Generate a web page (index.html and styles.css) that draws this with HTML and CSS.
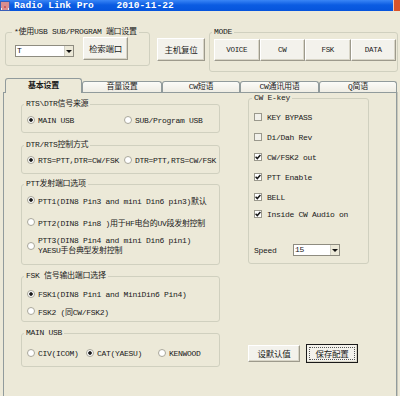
FILE: index.html
```html
<!DOCTYPE html>
<html lang="zh-CN">

<head>
    <meta charset="UTF-8">
    <meta name="viewport" content="width=device-width, initial-scale=1.0">
    <title>Radio Link Pro</title>
    <link rel="stylesheet" href="styles.css">
</head>

<body>
    <div class="titlebar">
        <svg class="app-icon" viewBox="0 0 10 10">
            <rect x="0" y="0" width="10" height="10" fill="#f4f4f4"/>
            <path d="M1 2h3M1 4h3M6 2h3M6 4h3M5 1v8M1 6h8M2 8h2M6 8h2" stroke="#c0282a" stroke-width="1"/>
            <rect x="0.5" y="0.5" width="9" height="9" fill="none" stroke="#3a5fb8" stroke-width="1"/>
        </svg>
        <span class="title">Radio Link Pro    2010-11-22</span>
        <span class="close-btn"></span>
    </div>

    <div class="toolbar">
        <fieldset class="group port-group">
            <legend>*使用USB SUB/PROGRAM 端口设置</legend>
            <div class="port-row">
                <div class="combo port-combo">
                    <span class="combo-value">T</span>
                    <span class="combo-arrow"></span>
                </div>
                <button class="btn port-btn">检索端口</button>
            </div>
        </fieldset>

        <button class="btn reset-btn">主机复位</button>

        <fieldset class="group mode-group">
            <legend>MODE</legend>
            <div class="mode-row">
                <button class="btn mode-btn">VOICE</button>
                <button class="btn mode-btn">CW</button>
                <button class="btn mode-btn">FSK</button>
                <button class="btn mode-btn">DATA</button>
            </div>
        </fieldset>
    </div>

    <div class="tabs">
        <div class="tab active">基本设置</div>
        <div class="tab tab-w80">音量设置</div>
        <div class="tab">CW短语</div>
        <div class="tab tab-w79">CW通讯用语</div>
        <div class="tab">Q简语</div>
    </div>

    <div class="tab-panel">
        <div class="left-col">
            <fieldset class="group opt-group g-source">
                <legend>RTS\DTR信号来源</legend>
                <div class="radio-row">
                    <label class="radio-item w97"><span class="radio checked"></span>MAIN USB</label>
                    <label class="radio-item"><span class="radio"></span>SUB/Program USB</label>
                </div>
            </fieldset>

            <fieldset class="group opt-group g-control">
                <legend>DTR/RTS控制方式</legend>
                <div class="radio-row">
                    <label class="radio-item w97"><span class="radio checked"></span>RTS=PTT,DTR=CW/FSK</label>
                    <label class="radio-item"><span class="radio"></span>DTR=PTT,RTS=CW/FSK</label>
                </div>
            </fieldset>

            <fieldset class="group opt-group g-ptt">
                <legend>PTT发射端口选项</legend>
                <div class="radio-row">
                    <label class="radio-item"><span class="radio checked"></span>PTT1(DIN8 Pin3 and mini Din6 pin3)默认</label>
                </div>
                <div class="radio-row row-gap12">
                    <label class="radio-item"><span class="radio"></span>PTT2(DIN8 Pin8 )用于HF电台的UV段发射控制</label>
                </div>
                <div class="radio-row row-gap9 two-line">
                    <label class="radio-item"><span class="radio"></span>
                        <span>PTT3(DIN8 Pin4 and mini Din6 pin1)<br>YAESU手台典型发射控制</span>
                    </label>
                </div>
            </fieldset>

            <fieldset class="group opt-group g-fsk">
                <legend>FSK 信号输出端口选择</legend>
                <div class="radio-row">
                    <label class="radio-item"><span class="radio checked"></span>FSK1(DIN8 Pin1 and MiniDin6 Pin4)</label>
                </div>
                <div class="radio-row row-gap7">
                    <label class="radio-item"><span class="radio"></span>FSK2 (同CW/FSK2)</label>
                </div>
            </fieldset>

            <fieldset class="group opt-group g-usb">
                <legend>MAIN USB</legend>
                <div class="radio-row">
                    <label class="radio-item w59"><span class="radio"></span>CIV(ICOM)</label>
                    <label class="radio-item w72"><span class="radio checked"></span>CAT(YAESU)</label>
                    <label class="radio-item"><span class="radio"></span>KENWOOD</label>
                </div>
            </fieldset>
        </div>

        <div class="right-col">
            <fieldset class="group ekey-group">
                <legend>CW E-key</legend>
                <label class="check-row"><span class="check off"></span>KEY BYPASS</label>
                <label class="check-row"><span class="check off"></span>Di/Dah Rev</label>
                <label class="check-row"><span class="check"><svg viewBox="0 0 6 6"><path d="M0.6 2.8 L2.3 4.6 L5.4 0.9" fill="none" stroke="#1a1a1a" stroke-width="1.5"/></svg></span>CW/FSK2 out</label>
                <label class="check-row"><span class="check"><svg viewBox="0 0 6 6"><path d="M0.6 2.8 L2.3 4.6 L5.4 0.9" fill="none" stroke="#1a1a1a" stroke-width="1.5"/></svg></span>PTT Enable</label>
                <label class="check-row"><span class="check"><svg viewBox="0 0 6 6"><path d="M0.6 2.8 L2.3 4.6 L5.4 0.9" fill="none" stroke="#1a1a1a" stroke-width="1.5"/></svg></span>BELL</label>
                <label class="check-row last"><span class="check"><svg viewBox="0 0 6 6"><path d="M0.6 2.8 L2.3 4.6 L5.4 0.9" fill="none" stroke="#1a1a1a" stroke-width="1.5"/></svg></span>Inside CW Audio on</label>

                <div class="speed-row">
                    <span class="speed-label">Speed</span>
                    <div class="combo speed-combo">
                        <span class="combo-value">15</span>
                        <span class="combo-arrow"></span>
                    </div>
                </div>
            </fieldset>

            <div class="action-row">
                <button class="btn action-btn">设默认值</button>
                <button class="btn action-btn default">保存配置</button>
            </div>
        </div>
    </div>
</body>

</html>
```

FILE: styles.css
```css
* {
    box-sizing: border-box;
}

body {
    margin: 0;
    width: 400px;
    height: 396px;
    overflow: hidden;
    background-color: #ece9d8;
    font-family: 'Liberation Mono', 'Noto Sans CJK SC', monospace;
    font-size: 8px;
    letter-spacing: -0.3px;
    color: #1a1a1a;
}

/* barra de titulo */
.titlebar {
    height: 11px;
    display: flex;
    align-items: center;
    background: linear-gradient(#3a86f6, #0b5ce2 45%, #0654dc);
}

.app-icon {
    width: 10px;
    height: 10px;
    margin-right: 4px;
    flex: none;
}

.title {
    color: #fff;
    font-weight: bold;
    font-size: 9.5px;
    letter-spacing: 0;
    line-height: 11px;
    white-space: pre;
}

.close-btn {
    margin-left: auto;
    width: 7px;
    height: 11px;
    background-color: #d9542c;
    border-left: 1px solid #f3c7b6;
}

/* grupos */
.group {
    margin: 0;
    padding: 0;
    min-width: 0;
    border: 1px solid #d0d0bf;
    border-radius: 3px;
}

.group legend {
    margin-left: -2px;
    padding: 0 2px;
    height: 10px;
    line-height: 10px;
    color: #1a1a1a;
}

/* botones */
.btn {
    margin: 0;
    padding: 0;
    font-family: inherit;
    font-size: 8px;
    letter-spacing: -0.3px;
    color: #1a1a1a;
    background-color: #f3f2ec;
    border: 1px solid;
    border-color: #fff #9d9a8c #9d9a8c #fff;
    box-shadow: inset -1px -1px 0 #d8d5c7;
}

.combo {
    display: flex;
    height: 12px;
    background-color: #fff;
    border: 1px solid #8e8c80;
}

.combo-value {
    flex: 1;
    line-height: 10px;
    padding-left: 1px;
}

.combo-arrow {
    width: 9px;
    display: flex;
    align-items: center;
    justify-content: center;
    background-color: #ece9d8;
    border-left: 1px solid #d0cfc4;
}

.combo-arrow::after {
    content: '';
    border-left: 3px solid transparent;
    border-right: 3px solid transparent;
    border-top: 3px solid #111;
}

/* barra superior */
.toolbar {
    display: flex;
    align-items: flex-start;
    padding: 16px 0 0 5px;
}

.port-group {
    width: 145px;
    padding: 0 0 5px 9px;
}

.port-group legend {
    margin-left: -3px;
}

.port-row {
    display: flex;
    align-items: flex-start;
    gap: 9px;
}

.port-combo {
    width: 59px;
    margin-top: 8px;
}

.port-btn {
    width: 45px;
    height: 23px;
    font-size: 8.5px;
}

.reset-btn {
    width: 48px;
    height: 23px;
    margin: 11px 0 0 7px;
    font-size: 8.5px;
}

.mode-group {
    width: 189px;
    margin-left: 4px;
    padding: 2px 1px 10px 4px;
}

.mode-row {
    display: flex;
}

.mode-btn {
    flex: 1;
    height: 22px;
    font-size: 7.5px;
}

/* pestanas */
.tabs {
    display: flex;
    align-items: flex-end;
    height: 14px;
    margin: 6px 3px 0;
    padding-left: 2px;
}

.tab {
    width: 78px;
    height: 11px;
    line-height: 10px;
    text-align: center;
    background: linear-gradient(#fbfbf8, #efede4);
    border: 1px solid #919b9c;
    border-bottom: none;
    border-radius: 3px 3px 0 0;
}

.tab-w80 {
    width: 80px;
}

.tab-w79 {
    width: 79px;
}

.tab.active {
    position: relative;
    width: 77px;
    height: 15px;
    margin-bottom: -1px;
    line-height: 13px;
    font-weight: bold;
    background: #ece9d8;
}

.tab-panel {
    display: grid;
    grid-template-columns: 199px 121px;
    column-gap: 28px;
    align-items: start;
    height: 310px;
    margin: 0 3px;
    padding-left: 17px;
    border: 1px solid #919b9c;
    border-bottom: none;
    box-shadow: 1px 0 0 #c9c7ba;
}

/* columna izquierda */
.left-col {
    margin-top: 6px;
}

.opt-group {
    padding-left: 5px;
}

.opt-group legend {
    margin-left: -3px;
}

.g-source {
    padding-top: 6px;
    padding-bottom: 7px;
}

.g-control {
    margin-top: 7px;
    padding-top: 5px;
    padding-bottom: 8px;
}

.g-ptt {
    margin-top: 5px;
    padding-top: 6px;
    padding-bottom: 9px;
}

.g-fsk {
    margin-top: 6px;
    padding-top: 8px;
    padding-bottom: 5px;
}

.g-usb {
    margin-top: 6px;
    padding-top: 10px;
    padding-bottom: 8px;
}

.radio-row {
    display: flex;
    align-items: center;
    height: 10px;
    white-space: nowrap;
}

.radio-row.two-line {
    height: 19px;
    line-height: 9.5px;
}

.row-gap12 {
    margin-top: 12px;
}

.row-gap9 {
    margin-top: 9px;
}

.row-gap7 {
    margin-top: 7px;
}

.radio-item {
    display: flex;
    align-items: center;
}

.w97 {
    width: 97px;
}

.w59 {
    width: 59px;
}

.w72 {
    width: 72px;
}

.radio {
    flex: none;
    width: 8px;
    height: 8px;
    margin-right: 3px;
    border: 1px solid #a9a79b;
    border-radius: 50%;
    background: #fff;
}

.radio.checked {
    background: radial-gradient(circle, #1a1a1a 0 1.4px, #fff 2.2px);
}

/* columna derecha */
.ekey-group {
    padding: 9px 0 7px 5px;
}

.ekey-group legend {
    margin-left: -2px;
}

.check-row {
    display: flex;
    align-items: center;
    height: 10px;
    white-space: nowrap;
}

.check-row + .check-row {
    margin-top: 10px;
}

.check-row.last {
    margin-top: 7px;
}

.check {
    flex: none;
    display: flex;
    align-items: center;
    justify-content: center;
    width: 8px;
    height: 8px;
    margin-right: 5px;
    border: 1px solid #9a988c;
    background: #fff;
}

.check.off {
    background: #f1f0ea;
}

.check svg {
    width: 6px;
    height: 6px;
}

.speed-row {
    display: flex;
    align-items: center;
    margin-top: 25px;
}

.speed-label {
    width: 39px;
}

.speed-combo {
    width: 47px;
}

.action-row {
    display: flex;
    align-items: center;
    gap: 6px;
    margin-top: 80px;
}

.action-btn {
    width: 52px;
    height: 17px;
    font-size: 8.5px;
}

.action-btn.default {
    height: 19px;
    border: 1px solid #1a1a1a;
    outline: 1px dotted #555;
    outline-offset: -4px;
}
```
